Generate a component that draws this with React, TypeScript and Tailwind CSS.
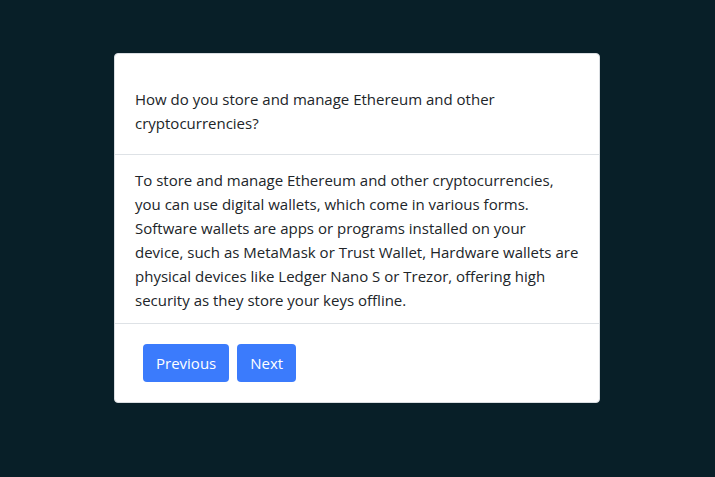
const answer = [
  'To store and manage Ethereum and other cryptocurrencies,',
  'you can use digital wallets, which come in various forms.',
  'Software wallets are apps or programs installed on your',
  'device, such as MetaMask or Trust Wallet, Hardware wallets are',
  'physical devices like Ledger Nano S or Trezor, offering high',
  'security as they store your keys offline.',
];

export default function App() {
  return (
    <div
      className="min-h-screen bg-[#081f28] pt-[53px]"
      style={{ fontFamily: '"Open Sans", "Noto Sans", sans-serif' }}
    >
      <div className="ml-[114px] w-[486px] h-[350px] bg-white border border-[#d9dde1] rounded-[4px] flex flex-col">
        {/* question */}
        <div className="px-5 pt-[33px] pb-[19px] border-b border-[#dee2e6] text-[15px] leading-6 text-[#212529]">
          How do you store and manage Ethereum and other cryptocurrencies?
        </div>

        {/* answer */}
        <div className="px-5 pt-[13px] pb-[11px] border-b border-[#dee2e6] text-[15px] leading-6 text-[#212529]">
          {answer.map((line) => (
            <span key={line} className="block whitespace-nowrap">
              {line}
            </span>
          ))}
        </div>

        <div className="flex gap-2 pl-[28px] pt-5">
          <button className="h-[38px] px-[13px] rounded-[4px] bg-[#3b7bfc] text-white text-[15px]">Previous</button>
          <button className="h-[38px] px-[13px] rounded-[4px] bg-[#3b7bfc] text-white text-[15px]">Next</button>
        </div>
      </div>
    </div>
  );
}
